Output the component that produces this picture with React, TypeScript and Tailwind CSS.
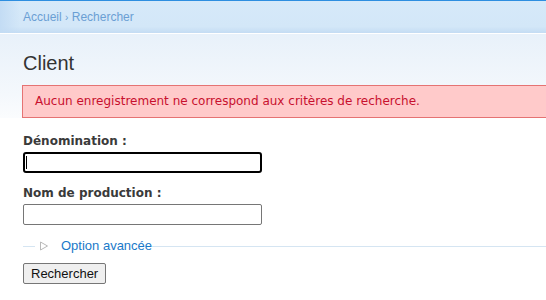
export default function App() {
  return (
    <div className="w-[546px] h-[300px] overflow-hidden bg-white font-['DejaVu_Sans',sans-serif] text-[#333]">
      <div className="h-px bg-[#2d8ee0]" />
      <div className="h-[32px] bg-[linear-gradient(to_bottom,#d6e9f9_0%,#d3e7f8_80%,#c4dcf3_100%)] relative">
        <div className="absolute inset-y-0 left-0 w-[20px] bg-[linear-gradient(to_right,#c3dcf4,rgba(211,231,248,0))]" />
        <div className="relative pl-[23px] pt-[9px] text-[12px] leading-[14px] text-[#6b9fd4] font-['Liberation_Sans',sans-serif]">
          Accueil <span className="text-[10px]">›</span> Rechercher
        </div>
      </div>
      <div className="h-px bg-white" />
      <div className="bg-[linear-gradient(to_bottom,#e8f1fa_0px,#f4f8fc_60px,#ffffff_100px)] pl-[23px]">
        <h1 className="pt-[17px] text-[20px] leading-[24px] font-['Liberation_Sans',sans-serif] text-[#333]">Client</h1>
        <div className="mt-[10px] -ml-px h-[33px] border border-r-0 border-[#e57373] bg-[#ffcaca] pl-[12px] pt-[8px] text-[12px] leading-[14px] text-[#c8102e]">
          Aucun enregistrement ne correspond aux critères de recherche.
        </div>
      </div>
      <div className="pl-[23px]">
        <label className="block mt-[16px] text-[12px] leading-[14px] font-bold text-[#3a3a3a]">Dénomination :</label>
        <div className="relative mt-[4px] w-[239px]">
          <input className="block w-[239px] h-[21px] border-2 border-black rounded-[3px] outline-none px-[2px] text-[13px]" />
          <span className="absolute left-[3px] top-[4px] w-px h-[13px] bg-black" />
        </div>
        <label className="block mt-[13px] text-[12px] leading-[14px] font-bold text-[#3a3a3a]">Nom de production :</label>
        <input className="block mt-[4px] w-[239px] h-[21px] border border-[#767676] rounded-[2px] outline-none px-[2px] text-[13px]" />
        <div className="mt-[13px] flex items-center h-[16px]">
          <div className="w-[12px] h-px bg-[#d5e5f2]" />
          <svg width="10" height="10" viewBox="0 0 10 10" className="ml-[4px]">
            <path d="M1.5 1 L8.5 5 L1.5 9 Z" fill="none" stroke="#b9b9b9" strokeWidth="1" />
          </svg>
          <span className="ml-[12px] text-[13px] leading-[16px] text-[#1a79c9] font-['Liberation_Sans',sans-serif]">Option avancée</span>
          <div className="flex-1 h-px bg-[#d5e5f2]" />
        </div>
        <button className="mt-[9px] h-[21px] px-[7px] border border-[#767676] rounded-[2px] bg-[#efefef] text-[13px] leading-[15px] text-[#111] font-['Liberation_Sans',sans-serif]">
          Rechercher
        </button>
      </div>
    </div>
  );
}
